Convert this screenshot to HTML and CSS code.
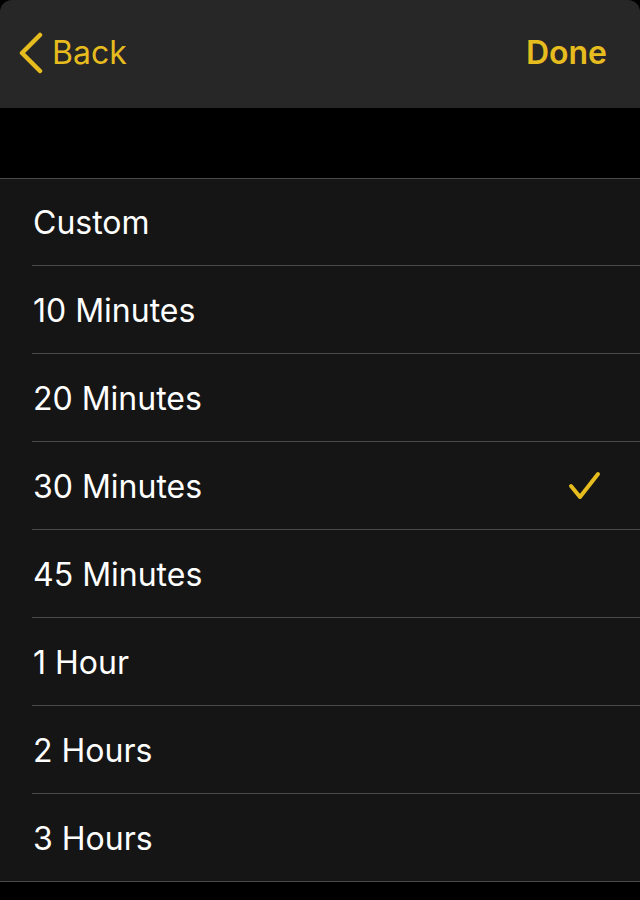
FILE: index.html
```html
<!DOCTYPE html>
<html lang="en">
  <head>
    <meta charset="UTF-8" />
    <meta name="viewport" content="width=device-width, initial-scale=1.0" />
    <title>Duration</title>
    <link rel="stylesheet" href="styles.css">
  </head>
  <body>
    <header class="nav">
      <a class="nav-back" href="#">
        <svg class="chevron" width="26" height="44" viewBox="0 0 26 44" aria-hidden="true">
          <path d="M23 4 L5 22 L23 40" fill="none" stroke="currentColor" stroke-width="4.5" stroke-linecap="round" stroke-linejoin="round" />
        </svg>
        <span>Back</span>
      </a>
      <a class="nav-done" href="#">Done</a>
    </header>

    <div class="spacer"></div>

    <ul class="options">
      <li class="option">Custom</li>
      <li class="option">10 Minutes</li>
      <li class="option">20 Minutes</li>
      <li class="option selected">30 Minutes
        <svg class="check" width="34" height="30" viewBox="0 0 34 30" aria-hidden="true">
          <path d="M3 15 L12 26 L30 3" fill="none" stroke="currentColor" stroke-width="4" stroke-linecap="round" stroke-linejoin="round" />
        </svg>
      </li>
      <li class="option">45 Minutes</li>
      <li class="option">1 Hour</li>
      <li class="option">2 Hours</li>
      <li class="option">3 Hours</li>
    </ul>
  </body>
</html>
```

FILE: styles.css
```css
:root {
  --accent: #e6bc1e;
  --nav-bg: #272727;
  --row-bg: #151515;
  --separator: #4a4a4a;
  --text-color: #ffffff;
  --font-family: 'Inter', 'Noto Sans', sans-serif;
}

* {
  box-sizing: border-box;
}

body {
  margin: 0;
  background: #000000;
  color: var(--text-color);
  font-family: var(--font-family);
}

.nav {
  height: 108px;
  background: var(--nav-bg);
  border-radius: 12px 12px 0 0;
  display: flex;
  align-items: center;
  justify-content: space-between;
  padding: 0 33px 4px 17px;
}

.nav a {
  color: var(--accent);
  text-decoration: none;
  font-size: 32px;
}

.nav-back {
  display: flex;
  align-items: center;
  gap: 9px;
}

.chevron {
  margin-top: 2px;
}

.nav-done {
  font-weight: 600;
}

.spacer {
  height: 70px;
}

.options {
  list-style: none;
  margin: 0;
  padding: 0 0 0 32px;
  background: var(--row-bg);
  border-top: 1px solid var(--separator);
  border-bottom: 1px solid var(--separator);
}

.option {
  height: 88px;
  display: flex;
  align-items: center;
  justify-content: space-between;
  padding: 1px 38px 0 1px;
  font-size: 32px;
  border-bottom: 1px solid var(--separator);
}

.option:first-child {
  height: 87px;
}

.option:last-child {
  height: 87px;
  border-bottom: none;
}

.check {
  color: var(--accent);
}
```
